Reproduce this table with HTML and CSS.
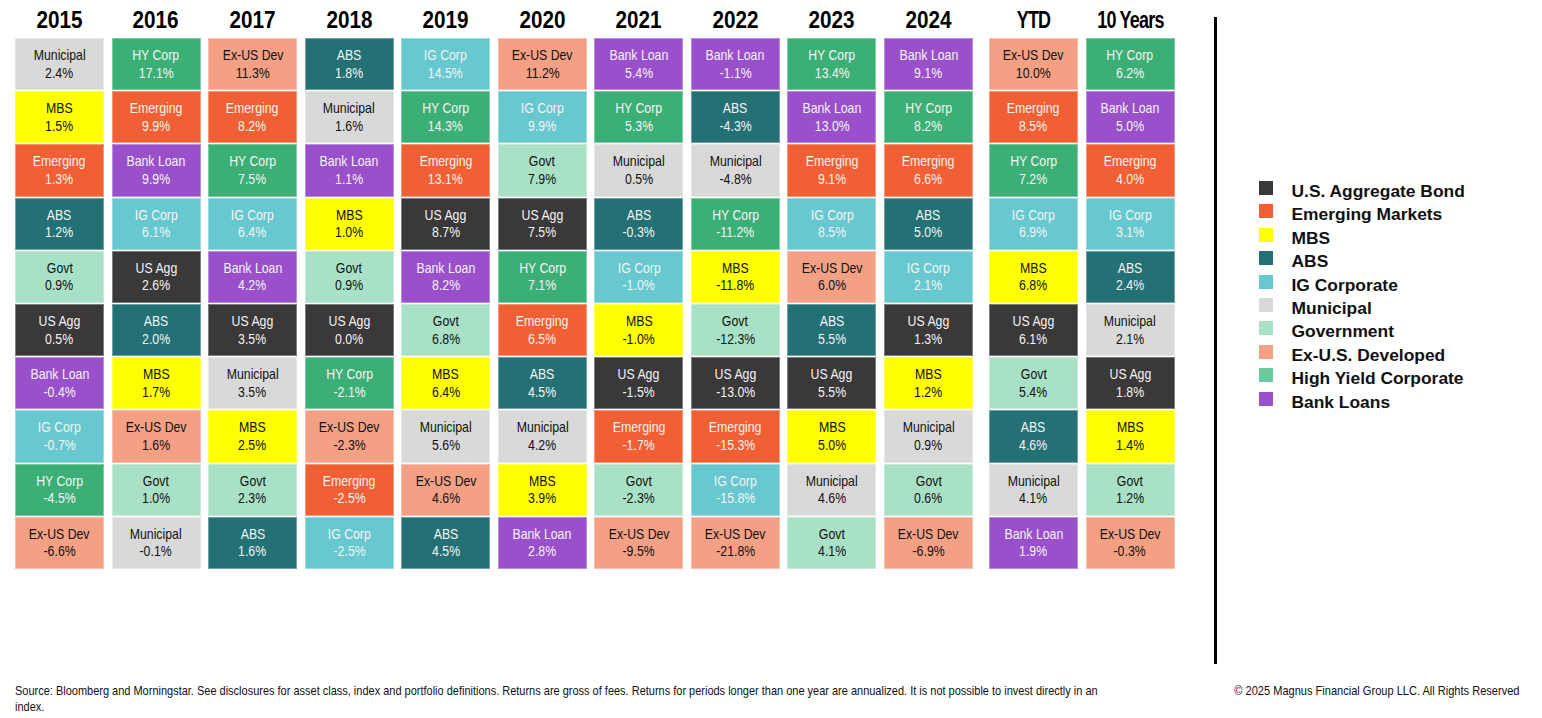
FILE: index.html
```html
<!DOCTYPE html>
<html lang="en">
<head>
<meta charset="utf-8">
<title>Fixed Income Asset Class Returns</title>
<link rel="stylesheet" href="styles.css">
</head>
<body>
<div class="page">
  <div class="top">
    <div class="chart">
      <div class="col">
        <div class="head"><span>2015</span></div>
        <div class="cell muni"><span>Municipal</span><span>2.4%</span></div>
        <div class="cell mbs"><span>MBS</span><span>1.5%</span></div>
        <div class="cell em"><span>Emerging</span><span>1.3%</span></div>
        <div class="cell abs"><span>ABS</span><span>1.2%</span></div>
        <div class="cell govt"><span>Govt</span><span>0.9%</span></div>
        <div class="cell agg"><span>US Agg</span><span>0.5%</span></div>
        <div class="cell bank"><span>Bank Loan</span><span>-0.4%</span></div>
        <div class="cell ig"><span>IG Corp</span><span>-0.7%</span></div>
        <div class="cell hy"><span>HY Corp</span><span>-4.5%</span></div>
        <div class="cell exus"><span>Ex-US Dev</span><span>-6.6%</span></div>
      </div>
      <div class="col">
        <div class="head"><span>2016</span></div>
        <div class="cell hy"><span>HY Corp</span><span>17.1%</span></div>
        <div class="cell em"><span>Emerging</span><span>9.9%</span></div>
        <div class="cell bank"><span>Bank Loan</span><span>9.9%</span></div>
        <div class="cell ig"><span>IG Corp</span><span>6.1%</span></div>
        <div class="cell agg"><span>US Agg</span><span>2.6%</span></div>
        <div class="cell abs"><span>ABS</span><span>2.0%</span></div>
        <div class="cell mbs"><span>MBS</span><span>1.7%</span></div>
        <div class="cell exus"><span>Ex-US Dev</span><span>1.6%</span></div>
        <div class="cell govt"><span>Govt</span><span>1.0%</span></div>
        <div class="cell muni"><span>Municipal</span><span>-0.1%</span></div>
      </div>
      <div class="col">
        <div class="head"><span>2017</span></div>
        <div class="cell exus"><span>Ex-US Dev</span><span>11.3%</span></div>
        <div class="cell em"><span>Emerging</span><span>8.2%</span></div>
        <div class="cell hy"><span>HY Corp</span><span>7.5%</span></div>
        <div class="cell ig"><span>IG Corp</span><span>6.4%</span></div>
        <div class="cell bank"><span>Bank Loan</span><span>4.2%</span></div>
        <div class="cell agg"><span>US Agg</span><span>3.5%</span></div>
        <div class="cell muni"><span>Municipal</span><span>3.5%</span></div>
        <div class="cell mbs"><span>MBS</span><span>2.5%</span></div>
        <div class="cell govt"><span>Govt</span><span>2.3%</span></div>
        <div class="cell abs"><span>ABS</span><span>1.6%</span></div>
      </div>
      <div class="col">
        <div class="head"><span>2018</span></div>
        <div class="cell abs"><span>ABS</span><span>1.8%</span></div>
        <div class="cell muni"><span>Municipal</span><span>1.6%</span></div>
        <div class="cell bank"><span>Bank Loan</span><span>1.1%</span></div>
        <div class="cell mbs"><span>MBS</span><span>1.0%</span></div>
        <div class="cell govt"><span>Govt</span><span>0.9%</span></div>
        <div class="cell agg"><span>US Agg</span><span>0.0%</span></div>
        <div class="cell hy"><span>HY Corp</span><span>-2.1%</span></div>
        <div class="cell exus"><span>Ex-US Dev</span><span>-2.3%</span></div>
        <div class="cell em"><span>Emerging</span><span>-2.5%</span></div>
        <div class="cell ig"><span>IG Corp</span><span>-2.5%</span></div>
      </div>
      <div class="col">
        <div class="head"><span>2019</span></div>
        <div class="cell ig"><span>IG Corp</span><span>14.5%</span></div>
        <div class="cell hy"><span>HY Corp</span><span>14.3%</span></div>
        <div class="cell em"><span>Emerging</span><span>13.1%</span></div>
        <div class="cell agg"><span>US Agg</span><span>8.7%</span></div>
        <div class="cell bank"><span>Bank Loan</span><span>8.2%</span></div>
        <div class="cell govt"><span>Govt</span><span>6.8%</span></div>
        <div class="cell mbs"><span>MBS</span><span>6.4%</span></div>
        <div class="cell muni"><span>Municipal</span><span>5.6%</span></div>
        <div class="cell exus"><span>Ex-US Dev</span><span>4.6%</span></div>
        <div class="cell abs"><span>ABS</span><span>4.5%</span></div>
      </div>
      <div class="col">
        <div class="head"><span>2020</span></div>
        <div class="cell exus"><span>Ex-US Dev</span><span>11.2%</span></div>
        <div class="cell ig"><span>IG Corp</span><span>9.9%</span></div>
        <div class="cell govt"><span>Govt</span><span>7.9%</span></div>
        <div class="cell agg"><span>US Agg</span><span>7.5%</span></div>
        <div class="cell hy"><span>HY Corp</span><span>7.1%</span></div>
        <div class="cell em"><span>Emerging</span><span>6.5%</span></div>
        <div class="cell abs"><span>ABS</span><span>4.5%</span></div>
        <div class="cell muni"><span>Municipal</span><span>4.2%</span></div>
        <div class="cell mbs"><span>MBS</span><span>3.9%</span></div>
        <div class="cell bank"><span>Bank Loan</span><span>2.8%</span></div>
      </div>
      <div class="col">
        <div class="head"><span>2021</span></div>
        <div class="cell bank"><span>Bank Loan</span><span>5.4%</span></div>
        <div class="cell hy"><span>HY Corp</span><span>5.3%</span></div>
        <div class="cell muni"><span>Municipal</span><span>0.5%</span></div>
        <div class="cell abs"><span>ABS</span><span>-0.3%</span></div>
        <div class="cell ig"><span>IG Corp</span><span>-1.0%</span></div>
        <div class="cell mbs"><span>MBS</span><span>-1.0%</span></div>
        <div class="cell agg"><span>US Agg</span><span>-1.5%</span></div>
        <div class="cell em"><span>Emerging</span><span>-1.7%</span></div>
        <div class="cell govt"><span>Govt</span><span>-2.3%</span></div>
        <div class="cell exus"><span>Ex-US Dev</span><span>-9.5%</span></div>
      </div>
      <div class="col">
        <div class="head"><span>2022</span></div>
        <div class="cell bank"><span>Bank Loan</span><span>-1.1%</span></div>
        <div class="cell abs"><span>ABS</span><span>-4.3%</span></div>
        <div class="cell muni"><span>Municipal</span><span>-4.8%</span></div>
        <div class="cell hy"><span>HY Corp</span><span>-11.2%</span></div>
        <div class="cell mbs"><span>MBS</span><span>-11.8%</span></div>
        <div class="cell govt"><span>Govt</span><span>-12.3%</span></div>
        <div class="cell agg"><span>US Agg</span><span>-13.0%</span></div>
        <div class="cell em"><span>Emerging</span><span>-15.3%</span></div>
        <div class="cell ig"><span>IG Corp</span><span>-15.8%</span></div>
        <div class="cell exus"><span>Ex-US Dev</span><span>-21.8%</span></div>
      </div>
      <div class="col">
        <div class="head"><span>2023</span></div>
        <div class="cell hy"><span>HY Corp</span><span>13.4%</span></div>
        <div class="cell bank"><span>Bank Loan</span><span>13.0%</span></div>
        <div class="cell em"><span>Emerging</span><span>9.1%</span></div>
        <div class="cell ig"><span>IG Corp</span><span>8.5%</span></div>
        <div class="cell exus"><span>Ex-US Dev</span><span>6.0%</span></div>
        <div class="cell abs"><span>ABS</span><span>5.5%</span></div>
        <div class="cell agg"><span>US Agg</span><span>5.5%</span></div>
        <div class="cell mbs"><span>MBS</span><span>5.0%</span></div>
        <div class="cell muni"><span>Municipal</span><span>4.6%</span></div>
        <div class="cell govt"><span>Govt</span><span>4.1%</span></div>
      </div>
      <div class="col">
        <div class="head"><span>2024</span></div>
        <div class="cell bank"><span>Bank Loan</span><span>9.1%</span></div>
        <div class="cell hy"><span>HY Corp</span><span>8.2%</span></div>
        <div class="cell em"><span>Emerging</span><span>6.6%</span></div>
        <div class="cell abs"><span>ABS</span><span>5.0%</span></div>
        <div class="cell ig"><span>IG Corp</span><span>2.1%</span></div>
        <div class="cell agg"><span>US Agg</span><span>1.3%</span></div>
        <div class="cell mbs"><span>MBS</span><span>1.2%</span></div>
        <div class="cell muni"><span>Municipal</span><span>0.9%</span></div>
        <div class="cell govt"><span>Govt</span><span>0.6%</span></div>
        <div class="cell exus"><span>Ex-US Dev</span><span>-6.9%</span></div>
      </div>
      <div class="col col-ytd">
        <div class="head head-word"><span>YTD</span></div>
        <div class="cell exus"><span>Ex-US Dev</span><span>10.0%</span></div>
        <div class="cell em"><span>Emerging</span><span>8.5%</span></div>
        <div class="cell hy"><span>HY Corp</span><span>7.2%</span></div>
        <div class="cell ig"><span>IG Corp</span><span>6.9%</span></div>
        <div class="cell mbs"><span>MBS</span><span>6.8%</span></div>
        <div class="cell agg"><span>US Agg</span><span>6.1%</span></div>
        <div class="cell govt"><span>Govt</span><span>5.4%</span></div>
        <div class="cell abs"><span>ABS</span><span>4.6%</span></div>
        <div class="cell muni"><span>Municipal</span><span>4.1%</span></div>
        <div class="cell bank"><span>Bank Loan</span><span>1.9%</span></div>
      </div>
      <div class="col">
        <div class="head head-word"><span>10 Years</span></div>
        <div class="cell hy"><span>HY Corp</span><span>6.2%</span></div>
        <div class="cell bank"><span>Bank Loan</span><span>5.0%</span></div>
        <div class="cell em"><span>Emerging</span><span>4.0%</span></div>
        <div class="cell ig"><span>IG Corp</span><span>3.1%</span></div>
        <div class="cell abs"><span>ABS</span><span>2.4%</span></div>
        <div class="cell muni"><span>Municipal</span><span>2.1%</span></div>
        <div class="cell agg"><span>US Agg</span><span>1.8%</span></div>
        <div class="cell mbs"><span>MBS</span><span>1.4%</span></div>
        <div class="cell govt"><span>Govt</span><span>1.2%</span></div>
        <div class="cell exus"><span>Ex-US Dev</span><span>-0.3%</span></div>
      </div>
    </div>
    <div class="divider"></div>
    <ul class="legend">
      <li><i class="sw agg"></i>U.S. Aggregate Bond</li>
      <li><i class="sw em"></i>Emerging Markets</li>
      <li><i class="sw mbs"></i>MBS</li>
      <li><i class="sw abs"></i>ABS</li>
      <li><i class="sw ig"></i>IG Corporate</li>
      <li><i class="sw muni"></i>Municipal</li>
      <li><i class="sw govt"></i>Government</li>
      <li><i class="sw exus"></i>Ex-U.S. Developed</li>
      <li><i class="sw hy-l"></i>High Yield Corporate</li>
      <li><i class="sw bank"></i>Bank Loans</li>
    </ul>
  </div>
  <div class="footer">
    <div class="source-box">
      <p class="source">Source: Bloomberg and Morningstar. See disclosures for asset class, index and portfolio definitions. Returns are gross of fees. Returns for periods longer than one year are annualized. It is not possible to invest directly in an index.</p>
    </div>
    <p class="copy"><span>© 2025 Magnus Financial Group LLC. All Rights Reserved</span></p>
  </div>
</div>
</body>
</html>
```
FILE: styles.css
```css
html, body {
  margin: 0;
  padding: 0;
  background: #ffffff;
}

body {
  width: 1542px;
  height: 718px;
  overflow: hidden;
  font-family: "Liberation Sans", Arial, sans-serif;
  color: #000;
}

.page {
  padding-left: 15px;
}

.top {
  display: flex;
  height: 664px;
}

.chart {
  display: flex;
  gap: 7.56px;
  align-items: flex-start;
}

.col {
  width: 89px;
  display: flex;
  flex-direction: column;
  gap: 1px;
}

.col-ytd {
  margin-left: 8.5px;
}

.head {
  height: 37px;
  display: flex;
  align-items: center;
  justify-content: center;
  padding-top: 2px;
  box-sizing: border-box;
  font-weight: bold;
  font-size: 23px;
  line-height: 24px;
  color: #000;
  white-space: nowrap;
}

.head span {
  display: inline-block;
  transform: scaleX(0.9);
}

.head-word span {
  letter-spacing: -1px;
  transform: scaleX(0.78);
}

.cell {
  height: 52.2px;
  box-sizing: border-box;
  display: flex;
  flex-direction: column;
  align-items: center;
  justify-content: center;
  font-size: 15px;
  line-height: 17.6px;
  color: #f4f4f4;
  box-shadow: inset 0 0 0 1px rgba(255, 255, 255, 0.35);
  padding-bottom: 1px;
  white-space: nowrap;
}

.cell span {
  display: inline-block;
  transform: scaleX(0.82);
}

.agg { background: #3a3838; }
.em { background: #f06034; }
.mbs { background: #ffff00; color: #111; }
.abs { background: #237174; }
.ig { background: #67c8cf; }
.muni { background: #d9d9d9; color: #111; }
.govt { background: #a9e1c7; color: #111; }
.exus { background: #f4a084; color: #111; }
.hy { background: #3caf76; }
.bank { background: #9a50cb; }
.hy-l { background: #6acb9e; }

.divider {
  width: 3px;
  background: #000;
  margin: 17px 0 0 39px;
  height: 647px;
}

.legend {
  list-style: none;
  margin: 181px 0 0 42px;
  padding: 0;
  font-family: "Liberation Sans", Arial, sans-serif;
  font-weight: bold;
  font-size: 17.4px;
  color: #111;
}

.legend li {
  display: flex;
  align-items: flex-start;
  height: 23.4px;
  line-height: 21px;
}

.sw {
  display: block;
  width: 14px;
  height: 14px;
  margin-right: 19px;
  flex: none;
}

.footer {
  display: flex;
  justify-content: space-between;
  align-items: flex-start;
  margin-top: 19px;
  padding-right: 23px;
  font-size: 13px;
  line-height: 16px;
  color: #111;
}

.footer p {
  margin: 0;
}

.source-box {
  width: 1090px;
  flex: none;
}

.source {
  width: 1298px;
  transform: scaleX(0.845);
  transform-origin: left top;
}

.copy {
  white-space: nowrap;
}

.copy span {
  display: inline-block;
  transform: scaleX(0.85);
  transform-origin: right top;
}
```
